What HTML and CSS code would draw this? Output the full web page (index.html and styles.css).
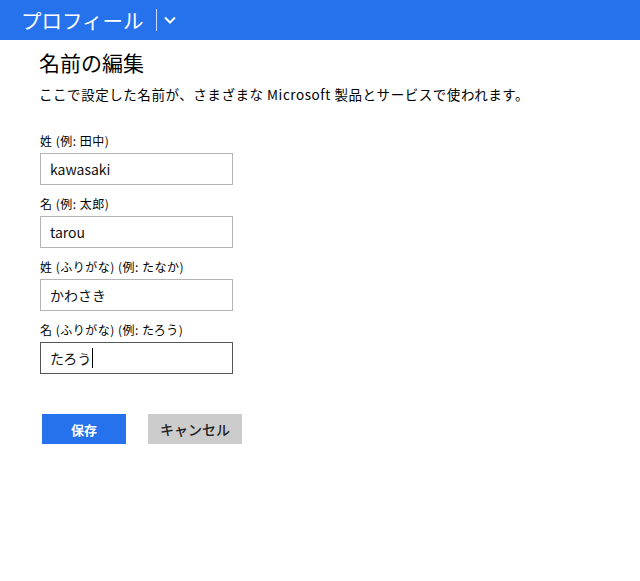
FILE: index.html
```html
<!DOCTYPE html>
<html lang="ja">
<head>
<meta charset="utf-8">
<link rel="stylesheet" href="styles.css">
</head>
<body>
<header class="topbar">
  <span class="topbar-title">プロフィール</span>
  <span class="topbar-sep"></span>
  <svg class="topbar-chev" width="14" height="10" viewBox="0 0 14 10"><path d="M2 2.5 L7 7.5 L12 2.5" fill="none" stroke="#fff" stroke-width="2"/></svg>
</header>
<main class="content">
  <h1 class="title">名前の編集</h1>
  <p class="desc">ここで設定した名前が、さまざまな Microsoft 製品とサービスで使われます。</p>
  <form class="form">
    <label class="field">
      <span class="label">姓 (例: 田中)</span>
      <input class="input" type="text" value="kawasaki">
    </label>
    <label class="field">
      <span class="label">名 (例: 太郎)</span>
      <input class="input" type="text" value="tarou">
    </label>
    <label class="field">
      <span class="label">姓 (ふりがな) (例: たなか)</span>
      <input class="input" type="text" value="かわさき">
    </label>
    <label class="field">
      <span class="label">名 (ふりがな) (例: たろう)</span>
      <span class="input input-focus">たろう<span class="caret"></span></span>
    </label>
    <div class="actions">
      <button type="button" class="btn btn-primary">保存</button>
      <button type="button" class="btn btn-secondary">キャンセル</button>
    </div>
  </form>
</main>
</body>
</html>
```
FILE: styles.css
```css
* { box-sizing: border-box; }
html, body { margin: 0; padding: 0; background: #fff; }
body {
  font-family: "Noto Sans CJK JP", "Noto Sans", sans-serif;
  color: #000;
}
.topbar {
  height: 40px;
  background: #2672ec;
  display: flex;
  align-items: center;
  padding-left: 21px;
}
.topbar-title {
  color: #fff;
  font-size: 20.5px;
  line-height: 1;
}
.topbar-sep {
  width: 1px;
  height: 22px;
  background: rgba(255,255,255,0.75);
  margin-left: 12px;
  margin-right: 6px;
}
.topbar-chev { display: block; }
.content { padding-left: 39px; }
.title {
  margin: 8px 0 0;
  font-size: 21px;
  font-weight: 400;
  line-height: 28px;
}
.desc {
  margin: 9px 0 0;
  font-size: 13.5px;
  letter-spacing: 0.55px;
  line-height: 18px;
}
.form { margin-top: 31px; display: flex; flex-direction: column; }
.field { display: flex; flex-direction: column; margin-bottom: 12px; }
.label {
  font-size: 12px;
  letter-spacing: 0.5px;
  line-height: 14px;
  margin-left: 1px;
  margin-bottom: 5px;
}
.input {
  display: flex;
  align-items: center;
  width: 193px;
  height: 32px;
  margin-left: 1px;
  border: 1px solid #b4b4b4;
  padding: 0 9px;
  font-family: "Noto Sans CJK JP", "Noto Sans", sans-serif;
  font-size: 14px;
  color: #111;
  background: #fff;
  outline: none;
}
.input-focus { border-color: #555; }
.caret {
  display: inline-block;
  width: 1px;
  height: 20px;
  background: #000;
  margin-left: 1px;
}
.actions { display: flex; gap: 22px; margin-top: 28px; margin-left: 3px; }
.btn {
  height: 30px;
  border: none;
  font-family: "Noto Sans CJK JP", "Noto Sans", sans-serif;
  font-size: 13px;
  font-weight: 700;
  padding: 0;
  cursor: pointer;
}
.btn-primary { width: 84px; background: #2672ec; color: #fff; }
.btn-secondary { width: 94px; background: #cccccc; color: #222; font-weight: 500; font-size: 14px; }
```
